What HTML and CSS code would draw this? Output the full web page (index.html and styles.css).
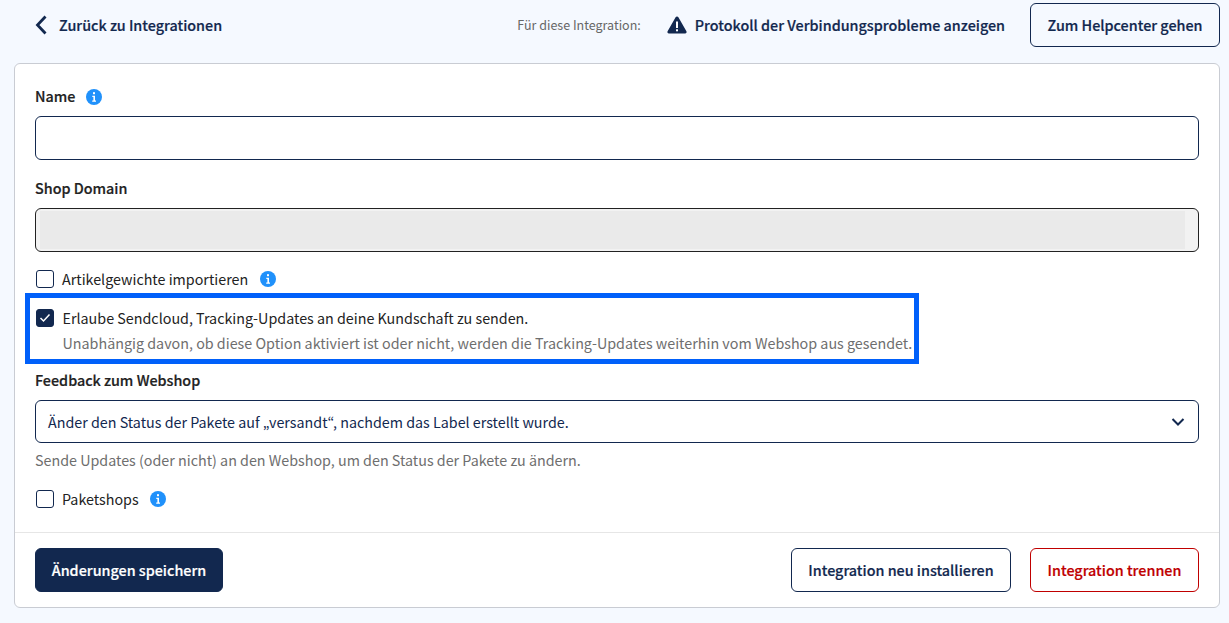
FILE: index.html
```html
<!DOCTYPE html>
<html lang="de">
<head>
<meta charset="utf-8">
<title>Integration</title>
<link rel="stylesheet" href="styles.css">
</head>
<body>
<header class="topbar">
  <a class="back">
    <svg class="back-icon" width="12" height="20" viewBox="0 0 12 20"><path d="M10.500 1.500 2.500 10 10.500 18.500" fill="none" stroke="#12284f" stroke-width="2.800"/></svg>
    <span>Zurück zu Integrationen</span>
  </a>
  <div class="top-actions">
    <span class="for-this">Für diese Integration:</span>
    <a class="log-link">
      <svg width="20" height="18" viewBox="0 0 20 18"><path d="M10 .5c.6 0 1.100.3 1.400.8l8 14c.6 1-.1 2.200-1.300 2.200H1.900C.7 17.500 0 16.300.600 15.300l8-14C8.900.8 9.400.5 10 .5Z" fill="#12284f"/><rect x="9" y="5.500" width="2" height="6.500" fill="#fff"/><rect x="9" y="13.300" width="2" height="2" fill="#fff"/></svg>
      <span>Protokoll der Verbindungsprobleme anzeigen</span>
    </a>
    <button class="btn btn-outline btn-help">Zum Helpcenter gehen</button>
  </div>
</header>
<main class="card">
  <div class="card-body">
    <div class="label-row name-label">
      <span class="label">Name</span>
      <svg class="info" viewBox="0 0 16 16"><use href="#i"/></svg>
    </div>
    <div class="input"></div>
    <div class="label-row domain-label"><span class="label">Shop Domain</span></div>
    <div class="input input-disabled"><div class="input-fill"></div></div>
    <label class="check-row weights">
      <span class="box"></span>
      <span class="check-text">Artikelgewichte importieren</span>
      <svg class="info" viewBox="0 0 16 16"><use href="#i"/></svg>
    </label>
    <div class="highlight">
      <span class="box box-on"><svg width="12" height="10" viewBox="0 0 12 10"><path d="M1.500 5 4.500 8 10.500 1.500" fill="none" stroke="#fff" stroke-width="1.500"/></svg></span>
      <div class="highlight-text">
        <div class="check-text">Erlaube Sendcloud, Tracking-Updates an deine Kundschaft zu senden.</div>
        <div class="muted">Unabhängig davon, ob diese Option aktiviert ist oder nicht, werden die Tracking-Updates weiterhin vom Webshop aus gesendet.</div>
      </div>
    </div>
    <div class="label-row feedback-label"><span class="label">Feedback zum Webshop</span></div>
    <div class="select">
      <span>Änder den Status der Pakete auf „versandt“, nachdem das Label erstellt wurde.</span>
      <svg width="14" height="10" viewBox="0 0 14 10"><path d="M1.500 2 7 7.500 12.500 2" fill="none" stroke="#12284f" stroke-width="2"/></svg>
    </div>
    <div class="muted hint">Sende Updates (oder nicht) an den Webshop, um den Status der Pakete zu ändern.</div>
    <label class="check-row shops">
      <span class="box"></span>
      <span class="check-text">Paketshops</span>
      <svg class="info" viewBox="0 0 16 16"><use href="#i"/></svg>
    </label>
  </div>
  <footer class="card-foot">
    <button class="btn btn-solid">Änderungen speichern</button>
    <div class="foot-right">
      <button class="btn btn-outline btn-reinstall">Integration neu installieren</button>
      <button class="btn btn-danger">Integration trennen</button>
    </div>
  </footer>
</main>
<svg class="defs" width="0" height="0"><defs><g id="i"><circle cx="8" cy="8" r="8" fill="#2091fb"/><rect x="7" y="3.200" width="2" height="2" fill="#fff"/><path d="M6.300 6.800H9v4.700h1v1.200H6.200v-1.200h1.200V8H6.300Z" fill="#fff"/></g></defs></svg>
</body>
</html>
```
FILE: styles.css
```css
* { box-sizing: border-box; }
html, body { margin: 0; padding: 0; }
body {
  width: 1229px;
  height: 623px;
  overflow: hidden;
  background: #f5f9ff;
  font-family: "Noto Sans CJK JP", "Noto Sans", sans-serif;
  font-size: 14.3px;
  line-height: 20px;
  color: #222;
}
.topbar {
  height: 63px;
  padding: 3px 9px 0 35px;
  display: flex;
  justify-content: space-between;
  align-items: flex-start;
}
.back {
  display: flex;
  align-items: center;
  height: 44px;
  gap: 12px;
  color: #12284f;
}
.back span, .log-link span, .label, .btn {
  font-size: 14.35px;
  font-weight: 500;
  -webkit-text-stroke: 0.2px currentColor;
  white-space: nowrap;
}
.top-actions { display: flex; align-items: center; height: 44px; }
.for-this { color: #666; font-size: 12.500px; margin-right: 26px; }
.log-link {
  display: flex;
  align-items: center;
  gap: 8px;
  color: #12284f;
  margin-right: 25px;
}
.btn {
  height: 44px;
  border-radius: 6px;
  font-family: inherit;
  line-height: 20px;
  background: #fff;
  padding: 0;
}
.btn-outline { border: 1px solid #12284f; color: #12284f; }
.btn-help { background: transparent; width: 190px; }
.btn-solid { background: #12284f; border: 1px solid #12284f; color: #fff; width: 188px; }
.btn-reinstall { width: 220px; }
.btn-danger { border: 1px solid #c00000; color: #c00000; width: 169px; }
.card {
  margin: 0 9px 0 14px;
  height: 545px;
  background: #fff;
  border: 1px solid #c9ccd3;
  border-radius: 6px;
  display: flex;
  flex-direction: column;
}
.card-body { flex: 1; padding: 0 20px; }
.label-row { display: flex; align-items: center; gap: 11px; height: 20px; }
.name-label { margin-top: 22px; margin-bottom: 10px; }
.name-label .info { margin-top: 2px; }
.domain-label { margin-top: 18px; margin-bottom: 10px; }
.feedback-label { margin-top: 6px; margin-bottom: 10px; }
.info { width: 16px; height: 16px; flex: none; }
.input {
  height: 44px;
  border: 1px solid #12284f;
  border-radius: 6px;
  background: #fff;
}
.input-disabled {
  border-color: #222;
  background: #f2f2f2;
  padding: 2px 13px 2px 4px;
}
.input-fill { height: 100%; background: #eaeaea; }
.check-row { display: flex; align-items: center; height: 20px; }
.check-row .check-text { margin-left: 8px; margin-right: 11px; }
.weights .check-text { margin-right: 12px; }
.weights { margin-top: 17px; }
.shops { margin-top: 19px; }
.box {
  width: 18px;
  height: 18px;
  margin-left: 1px;
  border: 1px solid #12284f;
  border-radius: 3px;
  background: #fff;
  flex: none;
  display: flex;
  align-items: center;
  justify-content: center;
}
.box-on { background: #12284f; }
.highlight {
  margin: 4px 0 0 -10px;
  width: 894px;
  height: 71px;
  border: 5px solid #0060fa;
  display: flex;
  align-items: flex-start;
  padding: 11px 0 0 6px;
}
.highlight-text { margin-left: 8.500px; font-size: 14.32px; }
.highlight .box { margin: 0 0 0 0; }
.highlight-text .check-text { height: 18px; line-height: 18px; }
.muted { color: #6e6e6e; }
.highlight-text .muted { margin-top: 7px; height: 18px; line-height: 18px; white-space: nowrap; }
.select {
  height: 43px;
  border: 1px solid #12284f;
  border-radius: 6px;
  display: flex;
  align-items: center;
  justify-content: space-between;
  padding: 0 13px 0 12px;
  color: #12284f;
}
.hint { margin-top: 7px; }
.card-foot {
  height: 75px;
  border-top: 1px solid #e6e6e6;
  padding: 15px 20px 0;
  display: flex;
  justify-content: space-between;
  align-items: flex-start;
}
.foot-right { display: flex; gap: 19px; }
.defs { position: absolute; }
```
